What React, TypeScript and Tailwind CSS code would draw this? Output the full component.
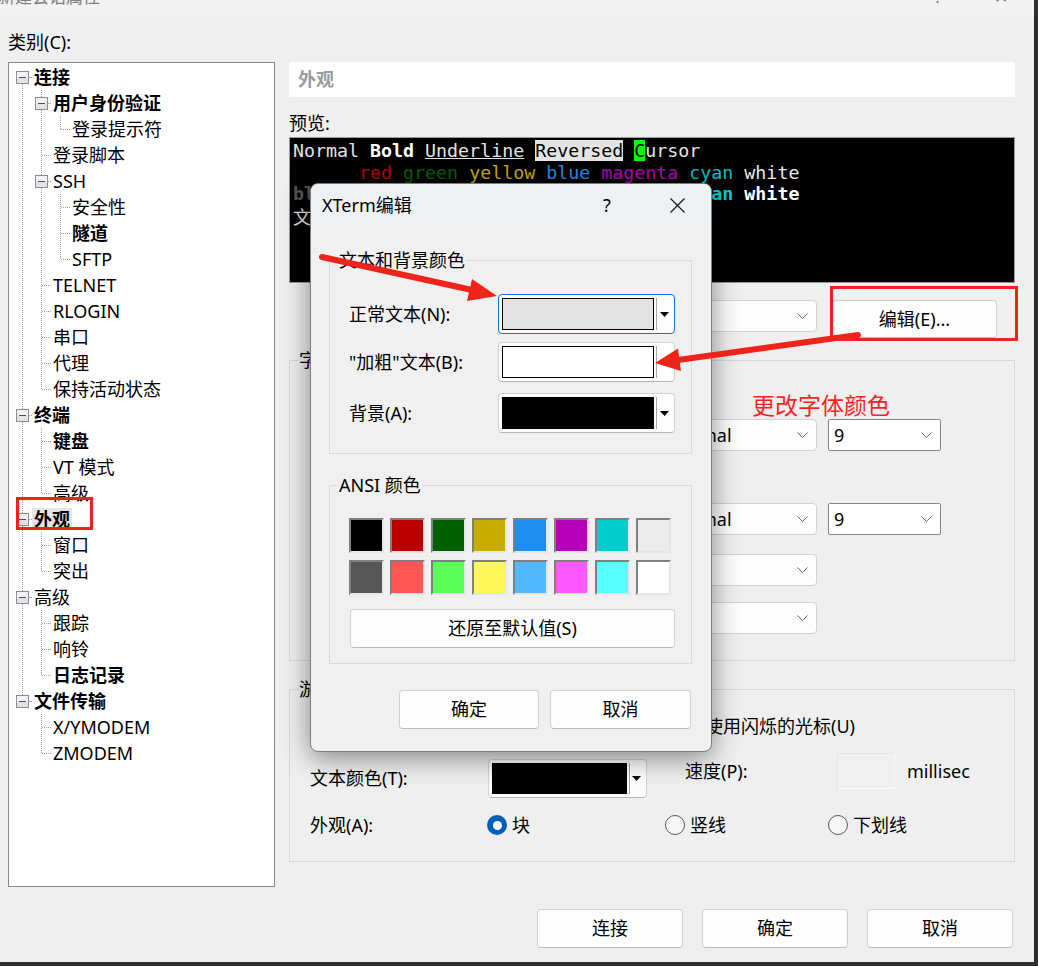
import React from "react";

type N = { t: string; l: number; b?: boolean; e?: boolean; s?: boolean };

const TREE: N[] = [
  { t: "连接", l: 0, b: true, e: true },
  { t: "用户身份验证", l: 1, b: true, e: true },
  { t: "登录提示符", l: 2 },
  { t: "登录脚本", l: 1 },
  { t: "SSH", l: 1, e: true },
  { t: "安全性", l: 2 },
  { t: "隧道", l: 2, b: true },
  { t: "SFTP", l: 2 },
  { t: "TELNET", l: 1 },
  { t: "RLOGIN", l: 1 },
  { t: "串口", l: 1 },
  { t: "代理", l: 1 },
  { t: "保持活动状态", l: 1 },
  { t: "终端", l: 0, b: true, e: true },
  { t: "键盘", l: 1, b: true },
  { t: "VT 模式", l: 1 },
  { t: "高级", l: 1 },
  { t: "外观", l: 0, b: true, e: true, s: true },
  { t: "窗口", l: 1 },
  { t: "突出", l: 1 },
  { t: "高级", l: 0, e: true },
  { t: "跟踪", l: 1 },
  { t: "响铃", l: 1 },
  { t: "日志记录", l: 1, b: true },
  { t: "文件传输", l: 0, b: true, e: true },
  { t: "X/YMODEM", l: 1 },
  { t: "ZMODEM", l: 1 },
];

function hasNext(i: number) {
  for (let j = i + 1; j < TREE.length; j++) {
    if (TREE[j].l < TREE[i].l) return false;
    if (TREE[j].l === TREE[i].l) return true;
  }
  return false;
}
function ancestorIdx(i: number, c: number) {
  for (let j = i - 1; j >= 0; j--) if (TREE[j].l === c) return j;
  return -1;
}

function TreeRow({ i }: { i: number }) {
  const n = TREE[i];
  const w = 19 * n.l + 23;
  const x = 19 * n.l + 13.5;
  const guides: React.ReactNode[] = [];
  for (let c = 0; c < n.l; c++) {
    const a = ancestorIdx(i, c);
    if (a >= 0 && hasNext(a)) {
      const gx = 19 * c + 13.5;
      guides.push(<line key={c} x1={gx} y1={0} x2={gx} y2={26} />);
    }
  }
  const top = i > 0;
  const bottom = hasNext(i);
  return (
    <div className="flex h-[26px] items-center">
      <svg width={w} height={26} className="shrink-0">
        <g stroke="#a0a0a0" strokeWidth={1} strokeDasharray="1 1" shapeRendering="crispEdges" fill="none">
          {guides}
          {top && bottom && <line x1={x} y1={0} x2={x} y2={26} />}
          {top && !bottom && <line x1={x} y1={0} x2={x} y2={14} />}
          {!top && bottom && <line x1={x} y1={14} x2={x} y2={26} />}
          <line x1={x + 0.5} y1={13.5} x2={w} y2={13.5} />
        </g>
        {n.e && (
          <g shapeRendering="crispEdges">
            <rect x={x - 6} y={7.5} width={12} height={12} fill="#f3f3f3" stroke="#8c8c8c" />
            <rect x={x - 5.5} y={14} width={11} height={5} fill="#e2e2e2" />
            <line x1={x - 3.5} y1={13.5} x2={x + 3.5} y2={13.5} stroke="#2d54a8" strokeWidth={1} />
          </g>
        )}
      </svg>
      <span
        className={`h-[22px] px-[2px] text-[18px] leading-[22px] whitespace-nowrap ${n.b ? "font-bold" : ""} ${
          n.s ? "bg-[#e4e4e4]" : ""
        }`}
      >
        {n.t}
      </span>
    </div>
  );
}

function Chevron() {
  return (
    <svg width="11" height="6" className="shrink-0">
      <polyline points="0.5,0.5 5.5,5.5 10.5,0.5" fill="none" stroke="#666" strokeWidth="1" />
    </svg>
  );
}

function Select({ cls, text }: { cls: string; text?: string }) {
  return (
    <div
      className={`flex items-center justify-between rounded-[4px] border border-[#d2d2d2] bg-[#fdfdfd] pl-[5px] pr-[8px] text-[18px] ${cls}`}
    >
      <span>{text}</span>
      <Chevron />
    </div>
  );
}

function SizeBox({ cls, text }: { cls: string; text: string }) {
  return (
    <div
      className={`flex items-center justify-between rounded-[2px] border border-[#858585] bg-white pl-[5px] pr-[8px] text-[18px] ${cls}`}
    >
      <span>{text}</span>
      <Chevron />
    </div>
  );
}

function Btn({ cls, children }: { cls: string; children: React.ReactNode }) {
  return (
    <div
      className={`flex items-center justify-center rounded-[4px] border border-[#d0d0d0] border-b-[#bcbcbc] bg-[#fdfdfd] text-[18px] ${cls}`}
    >
      {children}
    </div>
  );
}

function Tri() {
  return (
    <svg width="9" height="5" className="shrink-0">
      <polygon points="0,0 9,0 4.5,5" fill="#000" />
    </svg>
  );
}

function ColorCombo({ cls, sw, focus }: { cls: string; sw: string; focus?: boolean }) {
  return (
    <div
      className={`flex items-stretch p-[3px] rounded-[4px] border bg-[#fdfdfd] ${
        focus ? "border-[#1a6fd0]" : "border-[#d2d2d2] border-b-[#b5b5b5]"
      } ${cls}`}
    >
      <div className={`border border-black ${sw}`} />
      <div className="ml-[2px] w-px bg-[#a8a8a8]" />
      <div className="flex flex-1 items-center justify-center">
        <Tri />
      </div>
    </div>
  );
}

const SW1 = [
  "bg-[#000000]",
  "bg-[#bb0000]",
  "bg-[#006000]",
  "bg-[#c8ac00]",
  "bg-[#1e8ff0]",
  "bg-[#b400b8]",
  "bg-[#00cccc]",
  "bg-[#ececec]",
];
const SW2 = [
  "bg-[#565656]",
  "bg-[#ff5555]",
  "bg-[#58ff58]",
  "bg-[#fff65a]",
  "bg-[#52b9ff]",
  "bg-[#ff58ff]",
  "bg-[#58ffff]",
  "bg-[#ffffff]",
];

function Swatch({ cls }: { cls: string }) {
  return (
    <div
      className={`h-[35px] w-[35px] border-2 border-t-[#7f7f7f] border-l-[#7f7f7f] border-b-[#e6e6e6] border-r-[#e6e6e6] ${cls}`}
    />
  );
}

function Radio({ on }: { on?: boolean }) {
  return on ? (
    <span className="flex h-[20px] w-[20px] shrink-0 items-center justify-center rounded-full bg-[#005fb8]">
      <span className="h-[9px] w-[9px] rounded-full bg-white" />
    </span>
  ) : (
    <span className="h-[20px] w-[20px] shrink-0 rounded-full border border-[#5a5a5a] bg-[#f6f6f6]" />
  );
}

export default function App() {
  return (
    <div className="relative h-[966px] w-[1038px] overflow-hidden border-r-4 border-b-4 border-[#2f2f2f] bg-[#efefef] font-['Noto_Sans','Noto_Sans_CJK_SC',sans-serif] text-black">
      {/* window title strip (cut off) */}
      <div className="flex h-[16px] overflow-hidden bg-[#f3f3f3] text-[17px] leading-[20px] text-[#808080]">
        <span className="-mt-[13px] -ml-[2px]">新建会话属性</span>
        <span className="-mt-[13px] ml-auto">?</span>
        <span className="-mt-[13px] ml-[52px] mr-[26px]">✕</span>
      </div>

      <div className="flex">
        {/* left: category tree */}
        <div className="ml-[8px] flex w-[267px] flex-col">
          <div className="mt-[14px] text-[18px] leading-[24px]">类别(C):</div>
          <div className="mt-[8px] h-[825px] border border-[#828790] bg-white pt-[1px]">
            {TREE.map((_, i) => (
              <TreeRow key={i} i={i} />
            ))}
          </div>
        </div>

        {/* right panel */}
        <div className="ml-[14px] flex w-[726px] flex-col pt-[46px]">
          <div className="flex h-[35px] items-center bg-white pl-[9px] text-[18px] font-bold text-[#9a9a9a]">外观</div>
          <div className="mt-[14px] text-[18px] leading-[24px]">预览:</div>
          <div className="mt-[2px] h-[146px] overflow-hidden border border-[#9a9a9a] bg-black pt-[2px] pl-[3px] font-['DejaVu_Sans_Mono','Noto_Sans_CJK_SC',monospace] text-[18.3px] leading-[21.5px] whitespace-pre text-[#e3e3e3]">
            <div>
              Normal <span className="font-bold text-white">Bold</span> <span className="underline">Underline</span>{" "}
              <span className="bg-[#e3e3e3] text-black">Reversed</span> <span className="bg-[#00ff00] text-black">C</span>ursor
            </div>
            <div>
              {"      "}
              <span className="text-[#bb0000]">red</span> <span className="text-[#006000]">green</span>{" "}
              <span className="text-[#c8ac00]">yellow</span> <span className="text-[#1e8ff0]">blue</span>{" "}
              <span className="text-[#b400b8]">magenta</span> <span className="text-[#00c4c4]">cyan</span>{" "}
              <span className="text-[#e8e8e8]">white</span>
            </div>
            <div className="font-bold">
              <span className="text-[#565656]">black</span> <span className="text-[#ff5555]">red</span>{" "}
              <span className="text-[#58ff58]">green</span> <span className="text-[#fff65a]">yellow</span>{" "}
              <span className="text-[#52b9ff]">blue</span> <span className="text-[#ff58ff]">magenta</span>{" "}
              <span className="text-[#00d0d0]">cyan</span> <span className="text-white">white</span>
            </div>
            <div className="mt-[2px]">文本 中文字体示例</div>
          </div>

          <div className="mt-[17px] flex items-start">
            <Select cls="ml-[150px] h-[32px] w-[378px]" text="" />
            <Btn cls="ml-[15px] h-[38px] w-[165px]">编辑(E)...</Btn>
          </div>

          <fieldset className="mt-[12px] h-[311px] border border-[#d8d8d8]">
            <legend className="ml-[8px] px-[1px] text-[18px] leading-[20px]">字体</legend>
            <div className="mt-[49px] ml-[372px] flex">
              <Select cls="h-[32px] w-[155px]" text="Normal" />
              <SizeBox cls="ml-[11px] h-[32px] w-[113px]" text="9" />
            </div>
            <div className="mt-[52px] ml-[372px] flex">
              <Select cls="h-[32px] w-[155px]" text="Normal" />
              <SizeBox cls="ml-[11px] h-[32px] w-[113px]" text="9" />
            </div>
            <div className="mt-[19px] ml-[372px] flex">
              <Select cls="h-[32px] w-[155px]" text="" />
            </div>
            <div className="mt-[16px] ml-[372px] flex">
              <Select cls="h-[32px] w-[155px]" text="" />
            </div>
          </fieldset>

          <fieldset className="mt-[18px] h-[183px] border border-[#d8d8d8]">
            <legend className="ml-[8px] px-[1px] text-[18px] leading-[20px]">游标</legend>
            <div className="mt-[15px] ml-[391px] flex h-[24px] items-center text-[18px]">
              <span className="h-[20px] w-[20px] shrink-0 rounded-[4px] border border-[#5a5a5a] bg-[#f6f6f6]" />
              <span className="ml-[4px]">使用闪烁的光标(U)</span>
            </div>
            <div className="mt-[15px] flex items-start pl-[20px] text-[18px]">
              <span className="mt-[13px] w-[178px] leading-[24px]">文本颜色(T):</span>
              <ColorCombo cls="mt-[6px] h-[39px] w-[159px]" sw="w-[135px] bg-black" />
              <span className="mt-[6px] ml-[38px] w-[152px] leading-[24px]">速度(P):</span>
              <div className="h-[36px] w-[58px] border border-[#fafafa] border-t-[#e6e6e6] border-l-[#e6e6e6] bg-[#f0f0f0]" />
              <span className="mt-[6px] ml-[12px] leading-[24px]">millisec</span>
            </div>
            <div className="mt-[15px] flex h-[24px] items-center pl-[20px] text-[18px]">
              <span className="w-[177px]">外观(A):</span>
              <span className="flex w-[178px] items-center">
                <Radio on />
                <span className="ml-[5px]">块</span>
              </span>
              <span className="flex w-[163px] items-center">
                <Radio />
                <span className="ml-[5px]">竖线</span>
              </span>
              <span className="flex items-center">
                <Radio />
                <span className="ml-[5px]">下划线</span>
              </span>
            </div>
          </fieldset>

          <div className="mt-[47px] flex justify-end gap-[19px] pr-[2px]">
            <Btn cls="h-[39px] w-[146px]">连接</Btn>
            <Btn cls="h-[39px] w-[146px]">确定</Btn>
            <Btn cls="h-[39px] w-[146px]">取消</Btn>
          </div>
        </div>
      </div>

      {/* XTerm edit dialog */}
      <div className="absolute left-[310px] top-[183px] flex h-[569px] w-[402px] flex-col overflow-hidden rounded-[8px] border border-[#7d7d7d] bg-[#f0f0f0] shadow-[0_6px_28px_rgba(0,0,0,0.45)]">
        <div className="flex h-[43px] shrink-0 items-center bg-[#eef1f4] pl-[11px] text-[18px]">
          <span>XTerm编辑</span>
          <span className="ml-auto w-[12px] text-center">?</span>
          <svg width="15" height="15" className="ml-[57px] mr-[26px] shrink-0">
            <path d="M0.5 0.5 L14.5 14.5 M14.5 0.5 L0.5 14.5" stroke="#1a1a1a" strokeWidth="1.3" />
          </svg>
        </div>

        <fieldset className="ml-[18px] mt-[23px] w-[363px] border border-[#dadada] pb-[20px] text-[18px]">
          <legend className="ml-[8px] px-[1px] leading-[20px]">文本和背景颜色</legend>
          <div className="mt-[24px] flex items-center pl-[19px]">
            <span className="w-[149px]">正常文本(N):</span>
            <ColorCombo cls="h-[40px] w-[177px]" sw="w-[152px] bg-[#e3e3e3]" focus />
          </div>
          <div className="mt-[8px] flex items-center pl-[19px]">
            <span className="w-[149px]">"加粗"文本(B):</span>
            <ColorCombo cls="h-[40px] w-[177px]" sw="w-[152px] bg-white" />
          </div>
          <div className="mt-[11px] flex items-center pl-[19px]">
            <span className="w-[149px]">背景(A):</span>
            <ColorCombo cls="h-[40px] w-[177px]" sw="w-[152px] bg-black" />
          </div>
        </fieldset>

        <fieldset className="ml-[18px] mt-[21px] w-[363px] border border-[#dadada] pb-[15px] text-[18px]">
          <legend className="ml-[8px] px-[1px] leading-[20px]">ANSI 颜色</legend>
          <div className="mt-[23px] ml-[19px] grid w-[322px] grid-cols-8 gap-x-[6px] gap-y-[7px]">
            {SW1.map((c, k) => (
              <Swatch key={"a" + k} cls={c} />
            ))}
            {SW2.map((c, k) => (
              <Swatch key={"b" + k} cls={c} />
            ))}
          </div>
          <Btn cls="ml-[20px] mt-[14px] h-[39px] w-[325px]">还原至默认值(S)</Btn>
        </fieldset>

        <div className="mt-[26px] flex justify-end gap-[11px] pr-[20px]">
          <Btn cls="h-[39px] w-[140px]">确定</Btn>
          <Btn cls="h-[39px] w-[141px]">取消</Btn>
        </div>
      </div>

      {/* annotation text */}
      <div className="absolute left-[752px] top-[390px] text-[23px] leading-[28px] text-[#ff1f1f] font-['Noto_Sans_CJK_SC',sans-serif]">
        更改字体颜色
      </div>

      {/* annotation shapes */}
      <svg className="pointer-events-none absolute left-0 top-0" width="1038" height="966">
        <g fill="none" stroke="#f0231b" strokeWidth="3">
          <rect x="17.5" y="498.5" width="74" height="30" />
          <rect x="831.5" y="287.5" width="185" height="52" />
        </g>
        <g stroke="#f0231b" strokeWidth="6" strokeLinecap="round" fill="#f0231b">
          <line x1="322" y1="257" x2="472" y2="290" />
          <line x1="858" y1="335" x2="678" y2="360" />
        </g>
        <polygon points="497,296 472,279 467,301" fill="#f0231b" />
        <polygon points="655,363 678,348.5 681,371" fill="#f0231b" />
      </svg>
    </div>
  );
}
